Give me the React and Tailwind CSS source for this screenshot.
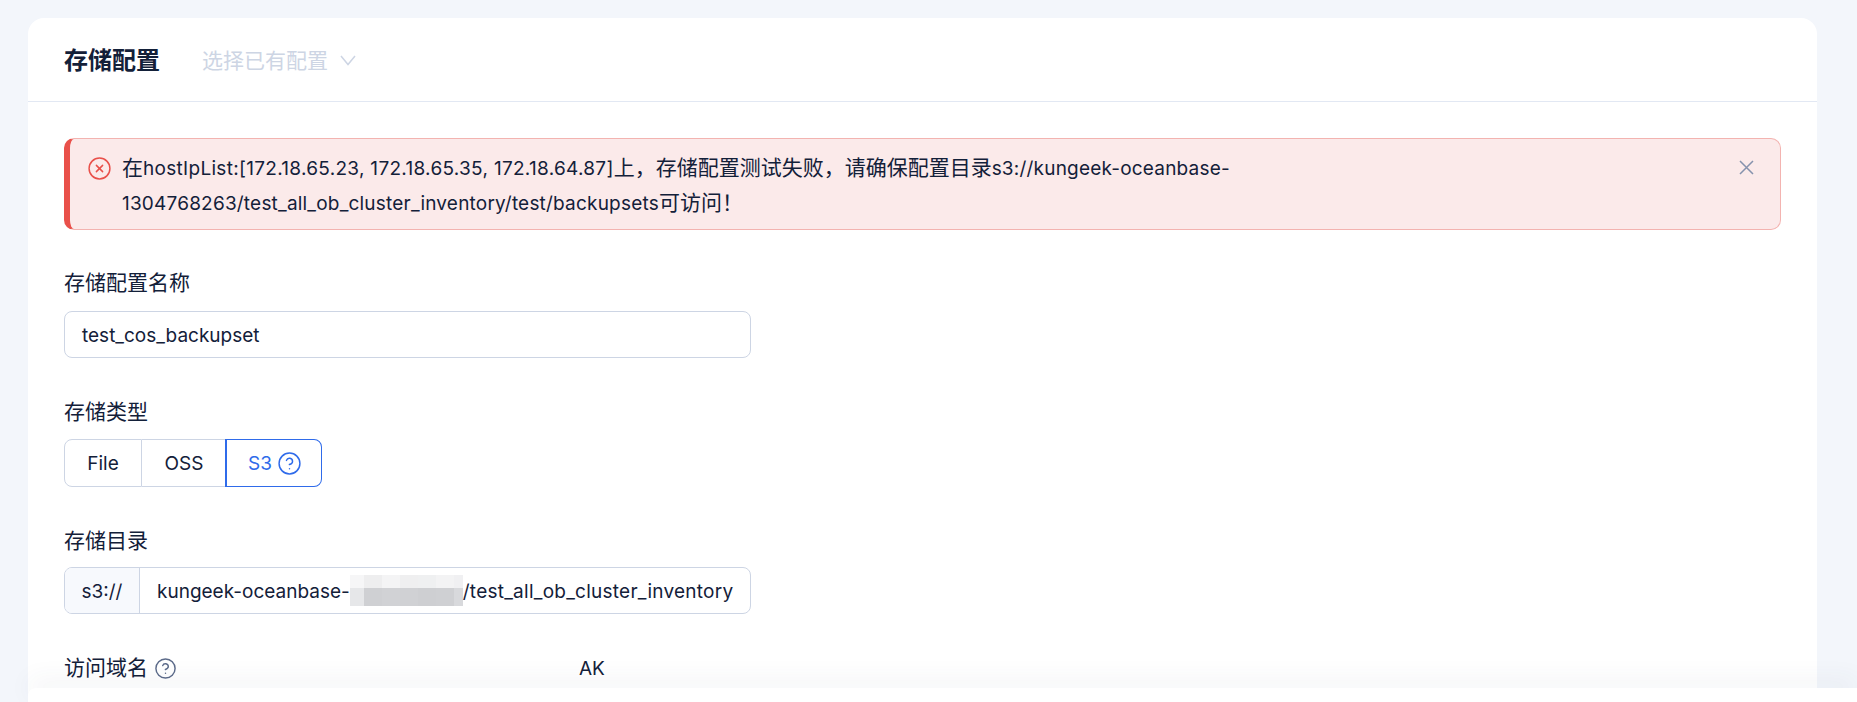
import { CircleHelp, CircleX } from 'lucide-react';

const mosaicTop = ['w-[14px] bg-[#f6f6f7]', 'w-[18px] bg-[#eeeeef]', 'w-[18px] bg-[#f4f4f5]', 'w-[18px] bg-[#efeff0]', 'w-[18px] bg-[#eff0f1]', 'w-[18px] bg-[#f3f3f4]', 'w-[9px] bg-[#f0f0f2]'];
const mosaicBottom = ['w-[14px] bg-[#e6e7e9]', 'w-[18px] bg-[#cfd0d3]', 'w-[18px] bg-[#d1d2d5]', 'w-[18px] bg-[#d0d1d4]', 'w-[18px] bg-[#cecfd2]', 'w-[18px] bg-[#cfd0d3]', 'w-[9px] bg-[#d8d9dc]'];

function Label({ children }) {
  return <div className="h-[30px] text-[21px] leading-[30px] text-[#132039]">{children}</div>;
}

// latin runs sit smaller than the CJK around them
function L({ children, className = '' }) {
  return <span className={`text-[19px] ${className}`}>{children}</span>;
}

export default function App() {
  return (
    <div className="relative h-[702px] overflow-hidden bg-[#f3f6fb] pt-[18px] pr-[40px] pl-[28px] font-['Inter','Noto_Sans_CJK_SC',sans-serif]">
      <div className="h-[800px] rounded-t-[16px] bg-white">
        {/* Header */}
        <div className="flex h-[84px] items-center border-b border-[#e2e8f3] px-[36px] pt-[2px]">
          <h1 className="text-[24px] leading-[32px] font-bold text-[#132039]">存储配置</h1>
          <div className="ml-[42px] flex items-center gap-[12px] text-[21px] text-[#cdd5e4]">
            选择已有配置
            <svg width="16" height="11" viewBox="0 0 16 11" fill="none" stroke="currentColor" strokeWidth="1.5">
              <path d="M1 1l7 8.5L15 1" />
            </svg>
          </div>
        </div>

        <div className="px-[36px] pt-[36px]">
          {/* Error alert */}
          <div className="flex h-[92px] items-start rounded-[10px] border border-l-[6px] border-[#f3b3b0] border-l-[#e9504a] bg-[#fbeaea] pt-[12px] pr-[26px] pl-[17px]">
            <CircleX size={25} strokeWidth={1.4} className="mt-[5px] shrink-0 text-[#e9504a]" />
            <p className="ml-[10px] w-[1120px] text-[21px] leading-[34px] text-[#132039]">
              在<L className="tracking-[0.3px]">hostIpList:[172.18.65.23, 172.18.65.35, 172.18.64.87]</L>上，存储配置测试失败，请确保配置目录<L className="whitespace-nowrap tracking-[0.2px]">s3://kungeek-oceanbase-</L>
              <br />
              <L className="tracking-[0.2px]">1304768263/test_all_ob_cluster_inventory/test/backupsets</L>可访问！
            </p>
            <svg width="15" height="15" viewBox="0 0 15 15" fill="none" stroke="currentColor" strokeWidth="1.5" className="mt-[9px] ml-auto shrink-0 text-[#8592ad]">
              <path d="M1 1l13 13M14 1L1 14" />
            </svg>
          </div>

          <div className="mt-[38px]">
            <Label>存储配置名称</Label>
            <div className="mt-[13px] flex h-[47px] w-[687px] items-center rounded-[8px] border border-[#cdd5e4] px-[17px] pt-[4px] text-[19px] text-[#132039]">
              test_cos_backupset
            </div>
          </div>

          <div className="mt-[39px]">
            <Label>存储类型</Label>
            <div className="mt-[12px] flex h-[48px] w-fit text-[19px] text-[#132039]">
              <div className="flex w-[78px] items-center justify-center rounded-l-[8px] border border-[#cdd5e4] pt-[3px]">File</div>
              <div className="flex w-[84px] items-center justify-center border-y border-[#cdd5e4] pt-[3px]">OSS</div>
              <div className="-ml-px flex w-[97px] items-center justify-center gap-[5px] rounded-r-[8px] border border-l-2 border-[#2f6bea] pl-[2px] text-[#2f6bea]">
                <span className="pt-[3px]">S3</span> <CircleHelp size={25} strokeWidth={1.4} />
              </div>
            </div>
          </div>

          <div className="mt-[39px]">
            <Label>存储目录</Label>
            <div className="mt-[11px] flex h-[47px] w-[687px] items-center overflow-hidden rounded-[8px] border border-[#cdd5e4] text-[19px] text-[#132039]">
              <div className="flex h-full w-[75px] items-center justify-center border-r border-[#cdd5e4] bg-[#f7f9fd] pt-[3px]">s3://</div>
              <div className="flex items-center whitespace-nowrap pl-[17px]">
                <span className="pt-[3px]">kungeek-oceanbase-</span>
                {/* blurred out bucket id */}
                <span className="flex h-[31px] w-[113px] flex-col">
                  <span className="flex h-[13px]">
                    {mosaicTop.map((c, i) => <span key={i} className={c} />)}
                  </span>
                  <span className="flex h-[18px]">
                    {mosaicBottom.map((c, i) => <span key={i} className={c} />)}
                  </span>
                </span>
                <span className="pt-[3px] tracking-[0.25px]">/test_all_ob_cluster_inventory</span>
              </div>
            </div>
          </div>

          <div className="mt-[39px] grid grid-cols-[515px_1fr]">
            <div className="flex items-center gap-[6px]">
              <Label>访问域名</Label>
              <CircleHelp size={23} strokeWidth={1.5} className="text-[#5c6b8a]" />
            </div>
            <Label><L>AK</L></Label>
          </div>
        </div>
      </div>

      {/* Sticky footer bar */}
      <div className="absolute right-0 bottom-0 left-[28px] h-[14px] rounded-tl-[8px] bg-white shadow-[0_-8px_24px_rgba(54,69,99,0.07)]" />
    </div>
  );
}
